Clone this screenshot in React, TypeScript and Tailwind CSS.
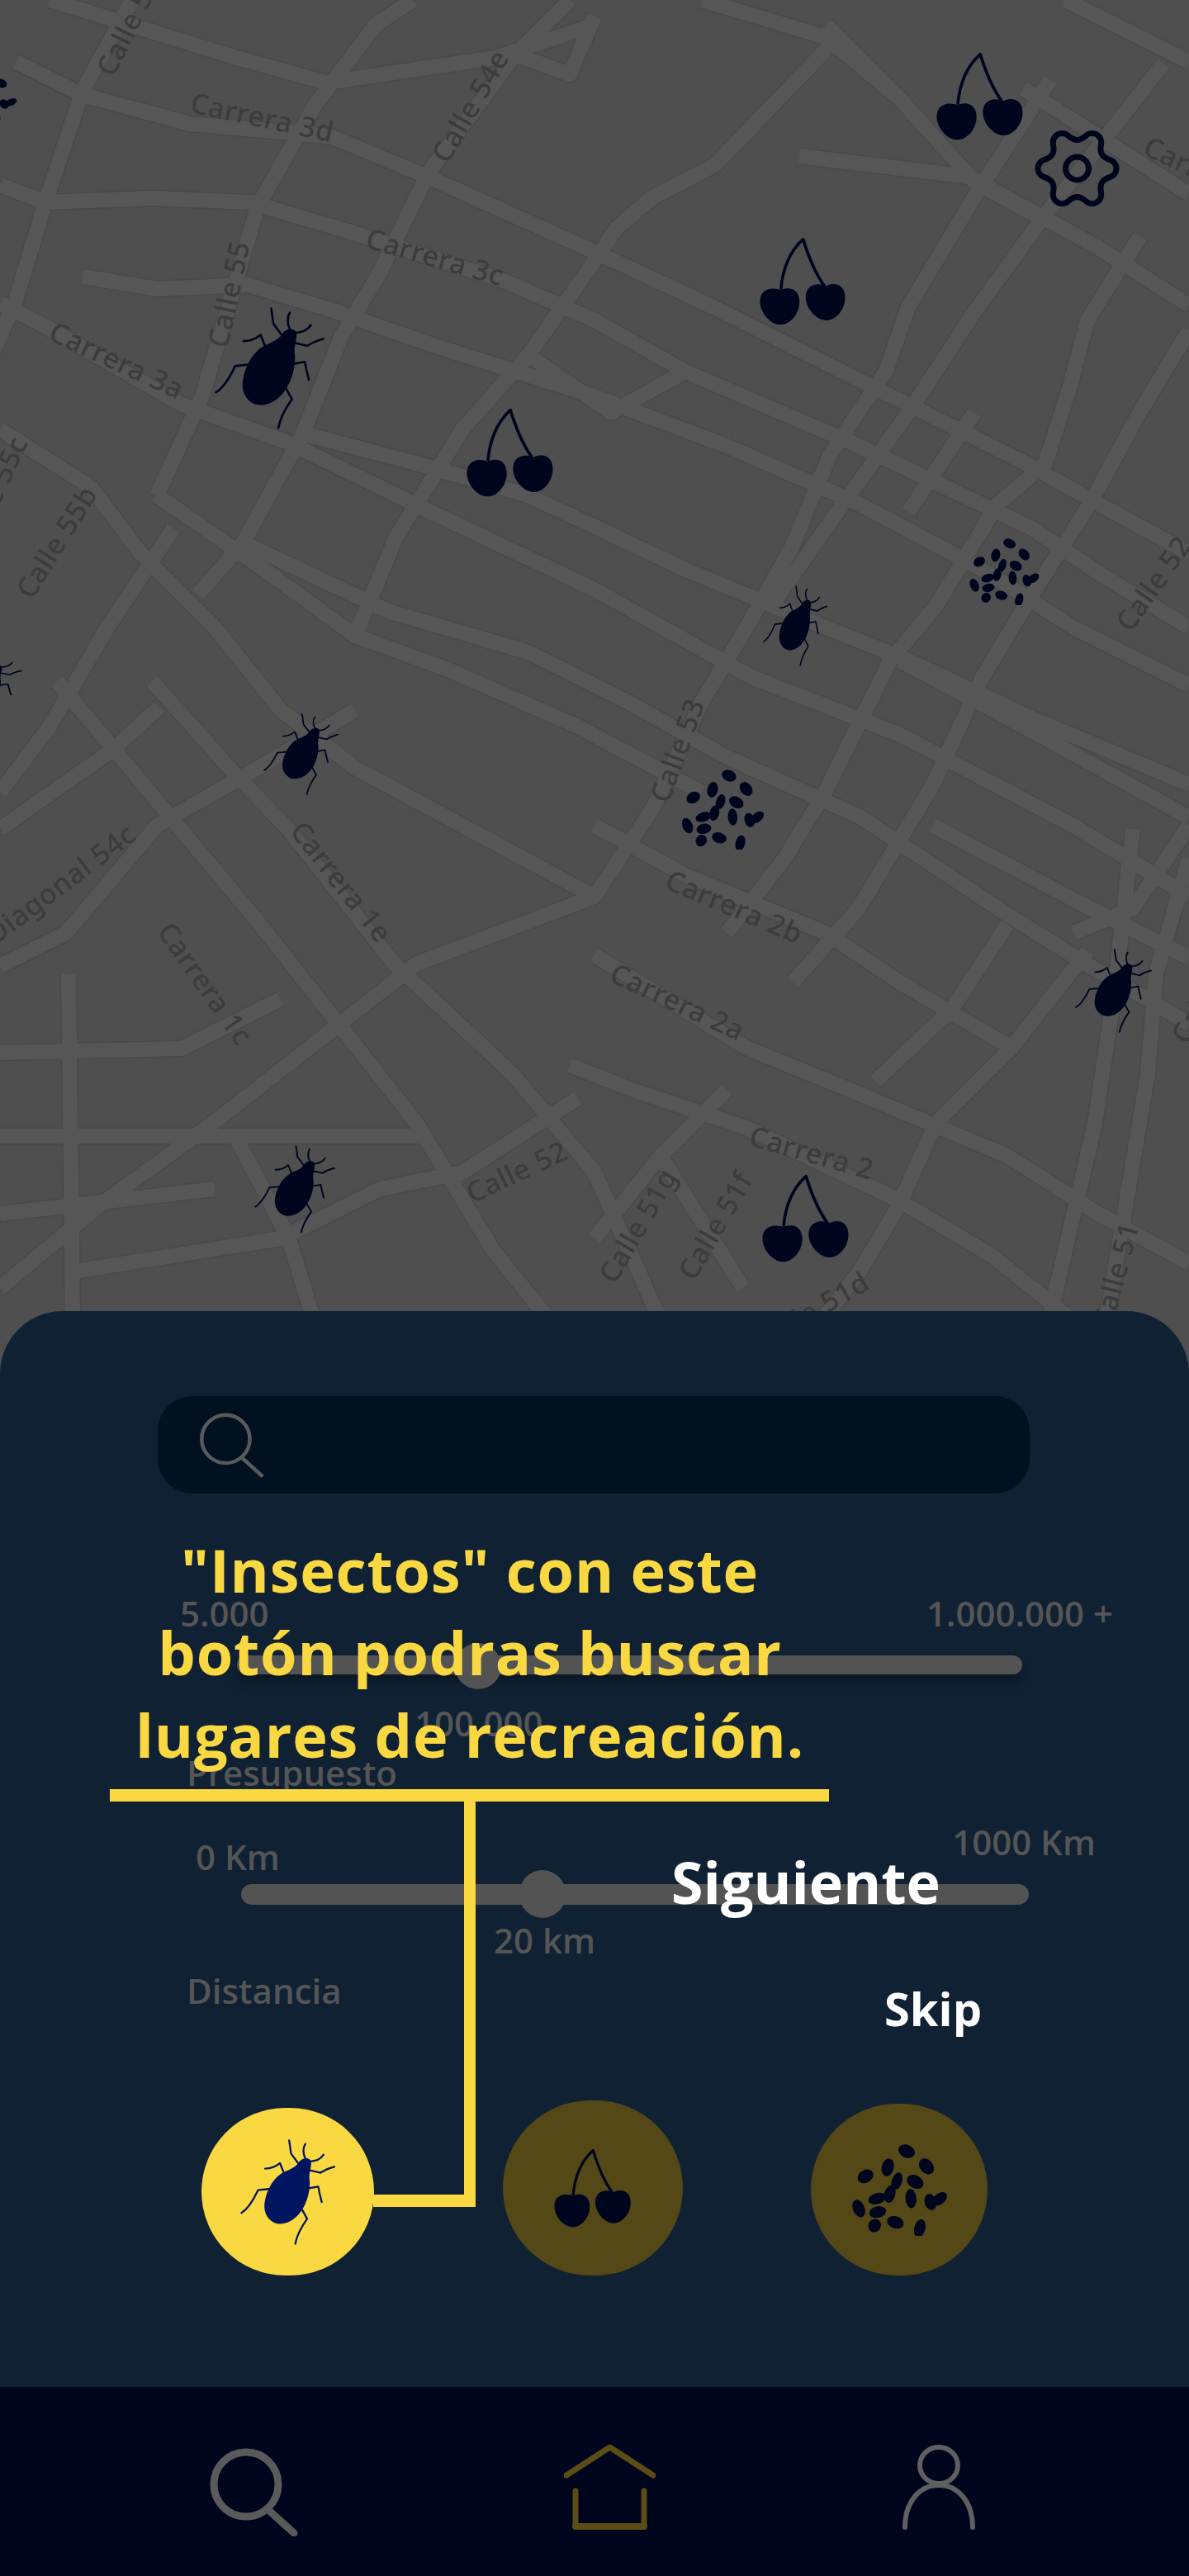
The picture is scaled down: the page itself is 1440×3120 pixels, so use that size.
const roads: string[] = [
  // carreras, upper left to lower right
  '60,0 290,71 395,100 600,70 720,30',
  '20,75 100,115 230,150 400,165 520,215 720,305 860,370 1000,440 1240,560 1330,610 1440,670',
  '0,224 55,245 184,240 303,245 441,286 615,342 720,388 830,450 1040,540 1250,640 1340,700 1440,760',
  '0,367 60,398 220,490 349,536 505,612 720,714 910,820 1090,890 1300,1000 1440,1085',
  '100,335 190,350 300,345 400,375 530,420 720,480 880,540 1040,610 1190,690 1300,760 1440,830',
  '367,525 500,560 640,600 830,690 1000,760 1100,800 1250,870 1440,950',
  '300,660 470,740 640,790 760,850 880,917 1041,989 1225,1111 1320,1170 1440,1240',
  '0,520 110,590 170,670 260,760 340,860 430,930 560,1000 720,1086',
  '190,600 320,690 430,770 540,810 700,880 850,960',
  '720,1157 904,1269 1041,1325 1220,1400 1330,1470 1440,1530',
  '690,1290 766,1320 904,1366 1087,1453 1200,1520 1300,1600',
  '720,1000 830,1060 1000,1130 1090,1190 1225,1269',
  '1290,0 1440,75',
  '968,189 1174,214 1239,250 1330,300 1440,370',
  '1239,107 1440,235',
  '1130,1000 1320,1100 1440,1160',
  '1090,800 1240,880 1440,990',
  // calles, lower left to upper right
  '160,0 100,110 55,245 18,367 -10,430',
  '500,0 455,30 381,128 312,250 280,360 245,480 190,600',
  '690,0 624,66 519,209 459,332 413,408 367,525 294,658 240,720',
  '1009,51 867,199 789,240 747,276 720,316 640,430 560,520 480,650 430,770',
  '1272,97 1179,240 1100,372 1073,449 1005,551 959,663 904,760 850,850 790,980 720,1086 505,1167 257,1361 120,1460 0,1560',
  '1409,77 1262,265 1180,378 1100,500 1000,640 930,740',
  '1381,286 1317,388 1294,474 1266,561 1207,612 1133,735 1078,800 1000,958 950,1040 880,1130',
  '1440,400 1380,500 1320,610 1250,720 1190,820 1130,950 1040,1100 960,1190',
  '1317,1152 1225,1269 1133,1361 1087,1463 1041,1540 995,1600',
  '1440,1000 1372,1100 1300,1130',
  '1220,1120 1152,1223 1060,1310',
  '1372,1004 1350,1200 1326,1361 1270,1600',
  '1440,1040 1400,1180 1390,1300 1340,1600',
  '210,640 130,760 60,880 0,960',
  '640,430 740,500 830,450',
  '1000,30 1090,120 1180,220 1262,265',
  '850,0 1000,45 1090,120',
  '720,20 690,90 624,66',
  '1180,500 1100,620',
  // lower left blocks
  '69,825 312,1116 505,1361 597,1514 666,1600',
  '184,825 285,938 349,1004 477,1167 620,1300 720,1420 800,1600',
  '0,1004 138,907 193,856',
  '0,1170 80,1130 190,1000 330,920 430,860',
  '0,1275 220,1270 340,1210',
  '0,1376 520,1376',
  '83,1180 88,1600',
  '285,1376 350,1500 380,1600',
  '90,1540 340,1500 460,1440 560,1420 700,1330',
  '0,1470 260,1440',
  '800,1400 880,1320',
  '720,1500 800,1400 900,1560',
]

const labels: { text: string; x: number; y: number; angle: number; anchor?: 'start' | 'end' | 'middle' }[] = [
  { text: 'Carrera 3d', x: 317, y: 145, angle: 12 },
  { text: 'Calle 54e', x: 572, y: 130, angle: -60 },
  { text: 'Calle 56', x: 158, y: 32, angle: -64 },
  { text: 'Carrera 3c', x: 526, y: 314, angle: 16 },
  { text: 'Calle 55', x: 280, y: 357, angle: -78 },
  { text: 'Carrera 3a', x: 140, y: 439, angle: 25 },
  { text: 'Calle 55c', x: 26, y: 532, angle: -65, anchor: 'end' },
  { text: 'Calle 55b', x: 71, y: 658, angle: -58 },
  { text: 'Diagonal 54c', x: 75, y: 1073, angle: -37 },
  { text: 'Carrera 1e', x: 411, y: 1070, angle: 52 },
  { text: 'Carrera 1c', x: 246, y: 1193, angle: 55 },
  { text: 'Calle 52', x: 627, y: 1422, angle: -25 },
  { text: 'Calle 53', x: 823, y: 910, angle: -70 },
  { text: 'Carrera 2b', x: 888, y: 1101, angle: 23 },
  { text: 'Carrera 2a', x: 819, y: 1216, angle: 25 },
  { text: 'Carrera 2', x: 982, y: 1399, angle: 16 },
  { text: 'Calle 51g', x: 775, y: 1486, angle: -60 },
  { text: 'Calle 51f', x: 869, y: 1486, angle: -60 },
  { text: 'Calle 51d', x: 985, y: 1590, angle: -30 },
  { text: 'Calle 51', x: 1354, y: 1545, angle: -75 },
  { text: 'Carrera 3', x: 1386, y: 178, angle: 25, anchor: 'start' },
  { text: 'Calle 52', x: 1362, y: 762, angle: -55, anchor: 'start' },
  { text: 'Calle', x: 1430, y: 1262, angle: -60, anchor: 'start' },
]

const seeds = [
  [217, 57, 28, 20, 20], [282, 104, 28, 21, 45], [155, 107, 28, 20, -75], [82, 135, 27, 20, -25],
  [245, 152, 29, 20, 25], [185, 150, 28, 17, -70], [162, 190, 28, 18, -75], [120, 204, 30, 17, -15],
  [231, 204, 30, 18, 85], [60, 235, 29, 19, 65], [122, 246, 28, 18, -10], [112, 288, 22, 20, -40],
  [180, 278, 28, 19, 15], [260, 297, 29, 18, -75], [295, 215, 26, 19, 70], [325, 205, 27, 17, -35],
]

type Box = { x?: number; y?: number; w: number; h: number; fill?: string; className?: string }

function Bug({ x, y, w, h, fill = '#00051e', className }: Box) {
  return (
    <svg x={x} y={y} width={w} height={h} viewBox="60 35 402 442" preserveAspectRatio="none" className={className}>
      <path
        fill={fill}
        d="M335 115C350 113 362 122 360 140C358 160 352 175 352 195C360 240 345 300 315 340C285 380 240 398 205 385C170 370 155 330 165 290C175 240 205 190 250 170C275 160 295 150 305 135C312 122 322 117 335 115Z"
      />
      <g fill="none" stroke={fill} strokeWidth="8" strokeLinecap="round" strokeLinejoin="round">
        <path d="M305 135L275 95L267 40" />
        <path d="M335 115C325 95 325 70 335 55" />
        <path d="M350 128C375 128 400 118 412 100" />
        <path d="M355 165L400 175C420 160 440 155 458 150" />
        <path d="M350 240L390 233C395 260 400 280 405 298" />
        <path d="M322 330L343 368C320 400 300 435 293 472" />
        <path d="M243 172L228 135C210 150 185 158 165 158" />
        <path d="M180 243L135 248C115 290 95 325 65 343" />
      </g>
    </svg>
  )
}

function Cherry({ x, y, w, h, fill = '#00051e', className }: Box) {
  const fruit = 'C100 222 140 218 152 250C170 300 130 358 87 358C44 358 0 300 14 255C25 220 70 222 87 232Z'
  return (
    <svg x={x} y={y} width={w} height={h} viewBox="10 40 322 320" preserveAspectRatio="none" className={className}>
      <path fill={fill} d={`M87 232${fruit}`} />
      <path fill={fill} transform="translate(168 -16)" d={`M87 232${fruit}`} />
      <path fill="none" stroke={fill} strokeWidth="11" strokeLinejoin="round" d="M88 230C95 150 120 90 170 45C190 110 215 170 248 216" />
    </svg>
  )
}

function Seeds({ x, y, w, h, fill = '#00051e', className }: Box) {
  return (
    <svg x={x} y={y} width={w} height={h} viewBox="30 35 325 285" preserveAspectRatio="none" className={className}>
      {seeds.map(([cx, cy, rx, ry, rot], i) => (
        <ellipse key={i} cx={cx} cy={cy} rx={rx} ry={ry} fill={fill} transform={`rotate(${rot} ${cx} ${cy})`} />
      ))}
    </svg>
  )
}

function Gear({ x, y, w, h }: Box) {
  // six wide lobes with shallow notches
  const pts: string[] = []
  for (let a = 0; a < 360; a += 3) {
    const t = (a * Math.PI) / 180
    const c = Math.cos(6 * t)
    const r = 41 + 6.5 * Math.sign(c) * Math.pow(Math.abs(c), 0.75)
    pts.push(`${(r * Math.cos(t)).toFixed(1)},${(r * Math.sin(t)).toFixed(1)}`)
  }
  return (
    <svg x={x} y={y} width={w} height={h} viewBox="-52.5 -49 105 98">
      <polygon points={pts.join(' ')} fill="none" stroke="#00051e" strokeWidth="7" strokeLinejoin="round" />
      <circle r="14" fill="none" stroke="#00051e" strokeWidth="7" />
    </svg>
  )
}

function SearchIcon({ className, stroke = 9 }: { className: string; stroke?: number }) {
  return (
    <svg viewBox="0 0 107 107" fill="none" stroke="#5a5a5a" strokeWidth={stroke} strokeLinecap="round" className={className}>
      <circle cx="44" cy="44" r="39" />
      <path d="M71 75L102 103" />
    </svg>
  )
}

function MapView() {
  return (
    <svg viewBox="0 0 1440 1700" className="block w-[1440px] h-[1700px] -mb-[112px] bg-[#4f4f4f]">
      <g fill="none" strokeLinejoin="round">
        {roads.map((r, i) => (
          <polyline key={i} points={r} stroke="#4a4a4a" strokeWidth="21" />
        ))}
        {roads.map((r, i) => (
          <polyline key={i} points={r} stroke="#565656" strokeWidth="18" />
        ))}
      </g>
      {labels.map((l) => (
        <text
          key={l.text + l.x}
          x={l.x}
          y={l.y}
          textAnchor={l.anchor ?? 'middle'}
          dominantBaseline="middle"
          transform={`rotate(${l.angle} ${l.x} ${l.y})`}
          fill="#3c3c3c"
          fontSize="34"
          fontWeight="500"
          fontFamily="'Noto Sans', sans-serif"
          letterSpacing="0.5"
        >
          {l.text}
        </text>
      ))}
      <Seeds x={-70} y={85} w={92} h={65} />
      <Bug x={-70} y={790} w={97} h={86} />
      <Bug x={260} y={372} w={133} h={148} />
      <Bug x={924} y={709} w={78} h={98} />
      <Bug x={319} y={864} w={91} h={99} />
      <Bug x={308} y={1387} w={98} h={107} />
      <Bug x={1302} y={1149} w={93} h={102} />
      <Cherry x={565} y={495} w={107} h={107} />
      <Cherry x={1134} y={64} w={107} h={106} />
      <Cherry x={920} y={288} w={106} h={106} />
      <Cherry x={923} y={1423} w={107} h={106} />
      <Seeds x={1172} y={652} w={88} h={81} />
      <Seeds x={823} y={932} w={104} h={97} />
      <Gear x={1252} y={155} w={105} h={98} />
    </svg>
  )
}

const muted = 'text-[42px] leading-[48px] font-semibold text-[#555555]'

function Panel() {
  return (
    <section className="relative flex-1 rounded-t-[76px] bg-[#0f2133] pt-[103px]">
      <div className="ml-[191px] flex h-[118px] w-[1056px] items-center rounded-[42px] bg-[#011120] pl-[49px]">
        <SearchIcon className="h-[80px] w-[81px]" stroke={6} />
      </div>

      <div className={`mt-[121px] flex justify-between pl-[218px] pr-[92px] ${muted}`}>
        <span>5.000</span>
        <span>1.000.000 +</span>
      </div>
      <div className="relative ml-[287px] mt-[27px] h-[23px] w-[951px] rounded-full bg-[#535353] shadow-[0_10px_12px_rgba(0,0,0,0.25)]">
        <div className="absolute left-[264px] top-[-15px] h-[56px] w-[56px] rounded-full bg-[#535353]" />
      </div>
      <div className={`mt-[35px] pl-[502px] ${muted}`}>100.000</div>
      <div className={`mt-[12px] pl-[226px] ${muted}`}>Presupuesto</div>

      <div className={`mt-[36px] flex h-[66px] justify-between pl-[237px] pr-[113px] ${muted}`}>
        <span className="mt-[18px]">0 Km</span>
        <span>1000 Km</span>
      </div>
      <div className="relative ml-[292px] mt-[9px] h-[25px] w-[954px] rounded-full bg-[#535353]">
        <div className="absolute left-[337px] top-[-17px] h-[58px] w-[56px] rounded-full bg-[#535353]" />
      </div>
      <div className={`mt-[19px] pl-[598px] ${muted}`}>20 km</div>
      <div className={`mt-[13px] pl-[226px] ${muted}`}>Distancia</div>

      <div className="mt-[109px] flex h-[212px] items-end pl-[244px]">
        <div className="flex h-[203px] w-[209px] items-center justify-center rounded-full bg-[#f9d841]">
          <Bug w={115} h={128} fill="#001560" />
        </div>
        <div className="ml-[156px] flex h-[212px] w-[218px] items-center justify-center rounded-full bg-[#544817]">
          <Cherry w={95} h={95} />
        </div>
        <div className="ml-[155px] flex h-[208px] w-[214px] items-center justify-center rounded-full bg-[#544817]">
          <Seeds w={120} h={111} />
        </div>
      </div>
    </section>
  )
}

function BottomNav() {
  return (
    <nav className="flex h-[229px] items-start bg-[#00051e] pl-[254px] pt-[70px]">
      <SearchIcon className="mt-[4px] h-[107px] w-[107px]" />
      <svg viewBox="0 0 111 103" fill="none" stroke="#5c4c16" strokeWidth="7" strokeLinecap="round" strokeLinejoin="round" className="ml-[322px] h-[103px] w-[111px]">
        <path d="M3 37L55.5 3L108 37" />
        <path d="M14 56V99H97V56" />
        <path d="M14 99H97" strokeWidth="8" />
      </svg>
      <svg viewBox="0 0 88 103" fill="none" stroke="#5f5f5f" strokeWidth="6" strokeLinecap="round" className="ml-[299px] h-[103px] w-[88px]">
        <ellipse cx="44" cy="25" rx="23" ry="22" />
        <path d="M3 100C3 70 20 49 44 49C68 49 85 70 85 100" />
      </svg>
    </nav>
  )
}

// tutorial layer, sits on top of the dimmed screen
function Coachmark() {
  return (
    <div className="absolute inset-0 font-['Open_Sans',sans-serif]">
      <p className="absolute left-[69px] top-[1851px] w-[1000px] text-center text-[72px] font-bold leading-[100px] tracking-[0.8px] text-[#f9d841]">
        "Insectos" con este
        <br />
        botón podras buscar
        <br />
        lugares de recreación.
      </p>
      <div className="absolute left-[133px] top-[2167px] h-[15px] w-[871px] bg-[#f9d841]" />
      <div className="absolute left-[562px] top-[2182px] h-[491px] w-[14px] bg-[#f9d841]" />
      <div className="absolute left-[452px] top-[2658px] h-[15px] w-[124px] bg-[#f9d841]" />
      <span className="absolute left-[813px] top-[2229px] text-[70px] font-bold leading-[100px] text-white">Siguiente</span>
      <span className="absolute left-[1071px] top-[2392px] text-[56px] font-bold leading-[80px] text-white">Skip</span>
    </div>
  )
}

export default function App() {
  return (
    <div className="relative flex h-[3120px] w-[1440px] flex-col overflow-hidden bg-[#4f4f4f] font-['Open_Sans',sans-serif]">
      <MapView />
      <Panel />
      <BottomNav />
      <Coachmark />
    </div>
  )
}
